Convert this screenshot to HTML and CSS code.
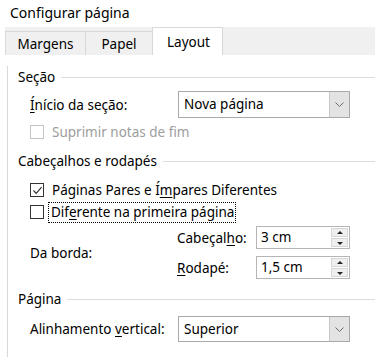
FILE: index.html
```html
<!DOCTYPE html>
<html lang="pt">
<head>
  <meta charset="UTF-8" />
  <title>Configurar página</title>
  <link rel="stylesheet" href="styles.css">
</head>
<body>

<div class="dialog">
  <div class="title">Configurar página</div>

  <div class="tabs">
    <div class="tab tab-margens">Margens</div>
    <div class="tab tab-papel">Papel</div>
    <div class="tab tab-layout active">Layout</div>
  </div>

  <div class="panel">
    <!-- Seção -->
    <div class="group-head first"><span>Seção</span><i></i></div>
    <div class="row select-row">
      <div class="lbl"><u>Í</u>nício da seção:</div>
      <div class="select">
        <span class="value">Nova página</span>
        <span class="arrow"><svg width="9" height="5" viewBox="0 0 9 5"><path d="M0.5 0.5 L4.5 4.5 L8.5 0.5" fill="none" stroke="#6b6b6b" stroke-width="1"/></svg></span>
      </div>
    </div>
    <div class="row check-row disabled suprimir">
      <span class="box"></span>
      <span class="text">Suprimir notas de fim</span>
    </div>

    <!-- Cabeçalhos e rodapés -->
    <div class="group-head cab"><span>Cabeçalhos e rodapés</span><i></i></div>
    <div class="row check-row pares">
      <span class="box"><svg width="11" height="11" viewBox="0 0 11 11"><path d="M1.5 5.5 L4.2 8.3 L9.6 2.2" fill="none" stroke="#333" stroke-width="1.2"/></svg></span>
      <span class="text">Páginas Pares e Í<u>m</u>pares Diferentes</span>
    </div>
    <div class="row check-row">
      <span class="box"></span>
      <span class="text focus">Dif<u>e</u>rente na primeira página</span>
    </div>

    <div class="borda">
      <div class="lbl">Da borda:</div>
      <div class="spins">
        <div class="spin-row">
          <div class="spin-lbl">Cabeçal<u>h</u>o:</div>
          <div class="spin">
            <span class="value">3 cm</span>
            <span class="btns"><span class="up"></span><span class="down"></span></span>
          </div>
        </div>
        <div class="spin-row">
          <div class="spin-lbl"><u>R</u>odapé:</div>
          <div class="spin">
            <span class="value">1,5 cm</span>
            <span class="btns"><span class="up"></span><span class="down"></span></span>
          </div>
        </div>
      </div>
    </div>

    <!-- Página -->
    <div class="group-head pag"><span>Página</span><i></i></div>
    <div class="row select-row alin">
      <div class="lbl">Alinhamento <u>v</u>ertical:</div>
      <div class="select">
        <span class="value">Superior</span>
        <span class="arrow"><svg width="9" height="5" viewBox="0 0 9 5"><path d="M0.5 0.5 L4.5 4.5 L8.5 0.5" fill="none" stroke="#6b6b6b" stroke-width="1"/></svg></span>
      </div>
    </div>
  </div>
</div>

</body>
</html>
```

FILE: styles.css
```css
* {
  margin: 0;
  padding: 0;
  box-sizing: border-box;
}

body {
  background: #fff;
  color: #000;
  font-family: "Noto Sans", sans-serif;
  font-size: 13.5px;
}

u {
  text-decoration: underline;
  text-underline-offset: 2px;
}

.title {
  height: 27px;
  padding: 3px 0 0 10px;
  font-size: 14px;
  line-height: 20px;
}

/* abas */
.tabs {
  display: flex;
  align-items: flex-end;
  margin-left: 5px;
  width: 370px;
  height: 28px;
  background: #f0f0f0;
}

.tab {
  height: 24px;
  line-height: 24px;
  text-align: center;
  border-top: 1px solid #d9d9d9;
  border-right: 1px solid #d9d9d9;
  background: #f0f0f0;
}

.tab-margens {
  width: 81px;
  border-left: 1px solid #d9d9d9;
}

.tab-papel {
  width: 67px;
}

.tab.active {
  width: 71px;
  height: 28px;
  line-height: 28px;
  background: #fff;
  border-left: 1px solid #d9d9d9;
  margin-left: -1px;
  padding-left: 2px;
}

/* painel */
.panel {
  margin-left: 7px;
  width: 368px;
  height: 293px;
  border-left: 1px solid #d9d9d9;
  padding-left: 10px;
}

.group-head {
  display: flex;
  align-items: center;
  height: 22px;
  line-height: 22px;
}

.group-head i {
  flex: 1;
  height: 1px;
  background: #dcdcdc;
  margin-left: 6px;
}

.group-head.first {
  margin-top: 11px;
}

.group-head.cab {
  margin-top: 7px;
}

.group-head.pag {
  margin-top: 9px;
}

.row {
  display: flex;
  align-items: center;
  padding-left: 12px;
}

.select-row {
  margin-top: 3px;
  height: 27px;
}

.select-row.alin {
  margin-top: 6px;
  height: 26px;
}

.lbl {
  width: 148px;
}

.select {
  display: flex;
  width: 172px;
  height: 100%;
  border: 1px solid #a9a9a9;
  background: #fff;
}

.select .value {
  flex: 1;
  padding-left: 5px;
  line-height: 24px;
}

.select .arrow {
  width: 20px;
  background: #e3e3e3;
  border-left: 1px solid #c8c8c8;
  display: flex;
  align-items: center;
  justify-content: center;
}

/* caixas de seleção */
.check-row {
  height: 22px;
}

.suprimir {
  margin-top: 3px;
}

.pares {
  margin-top: 7px;
}

.box {
  width: 14px;
  height: 14px;
  border: 1px solid #333;
  margin-right: 8px;
  display: flex;
  align-items: center;
  justify-content: center;
}

.disabled .box {
  border-color: #c4c4c4;
}

.disabled .text {
  color: #9d9d9d;
}

.text.focus {
  outline: 1px dotted #000;
  margin-left: -3px;
  padding: 0 1px 0 2px;
  line-height: 19px;
}

/* da borda */
.borda {
  display: flex;
  align-items: center;
  padding-left: 12px;
  margin-top: 3px;
}

.borda .lbl {
  width: 147px;
}

.spins {
  display: flex;
  flex-direction: column;
  gap: 7px;
}

.spin-row {
  display: flex;
  align-items: center;
  height: 23px;
}

.spin-lbl {
  width: 79px;
}

.spin {
  display: flex;
  width: 94px;
  height: 23px;
  border: 1px solid #b5b5b5;
}

.spin .value {
  flex: 1;
  padding-left: 4px;
  line-height: 21px;
}

.spin .btns {
  width: 19px;
  display: flex;
  flex-direction: column;
  padding: 1px;
  gap: 1px;
}

.spin .up,
.spin .down {
  flex: 1;
  background: #efefef;
  border: 1px solid #d6d6d6;
  position: relative;
}

.spin .up::after,
.spin .down::after {
  content: "";
  position: absolute;
  left: 50%;
  top: 50%;
  margin-left: -3px;
  border-left: 3px solid transparent;
  border-right: 3px solid transparent;
}

.spin .up::after {
  margin-top: -2px;
  border-bottom: 3px solid #222;
}

.spin .down::after {
  margin-top: -1px;
  border-top: 3px solid #222;
}
```
